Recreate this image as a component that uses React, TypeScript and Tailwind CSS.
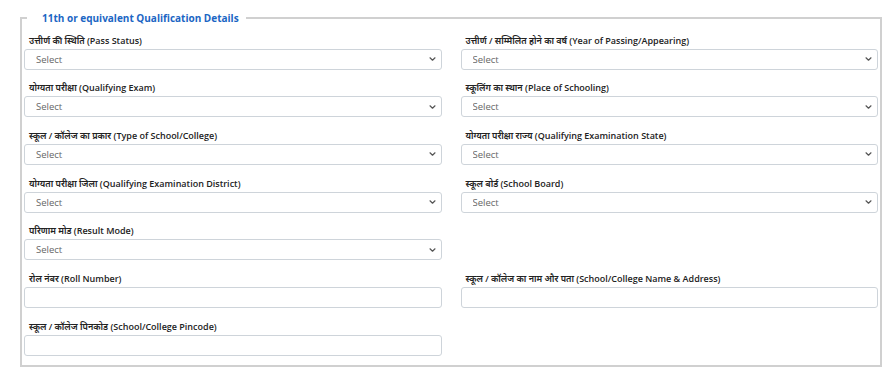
type Field = { label: string; kind: "select" | "input" | "empty" };

const fields: Field[] = [
  { label: "उत्तीर्ण की स्थिति (Pass Status)", kind: "select" },
  { label: "उत्तीर्ण / सम्मिलित होने का वर्ष (Year of Passing/Appearing)", kind: "select" },
  { label: "योग्यता परीक्षा (Qualifying Exam)", kind: "select" },
  { label: "स्कूलिंग का स्थान (Place of Schooling)", kind: "select" },
  { label: "स्कूल / कॉलेज का प्रकार (Type of School/College)", kind: "select" },
  { label: "योग्यता परीक्षा राज्य (Qualifying Examination State)", kind: "select" },
  { label: "योग्यता परीक्षा जिला (Qualifying Examination District)", kind: "select" },
  { label: "स्कूल बोर्ड (School Board)", kind: "select" },
  { label: "परिणाम मोड (Result Mode)", kind: "select" },
  { label: "", kind: "empty" },
  { label: "रोल नंबर (Roll Number)", kind: "input" },
  { label: "स्कूल / कॉलेज का नाम और पता (School/College Name & Address)", kind: "input" },
  { label: "स्कूल / कॉलेज पिनकोड (School/College Pincode)", kind: "input" },
];

function FormField({ field }: { field: Field }) {
  if (field.kind === "empty") return <div />;
  return (
    <div className="flex flex-col">
      <label className="block h-[17px] overflow-visible whitespace-nowrap pl-[5px] text-[9px] font-semibold leading-[17px] text-[#222]">
        {field.label}
      </label>
      {field.kind === "select" ? (
        <div className="relative h-[21px]">
          <select className="block h-[21px] w-full appearance-none rounded-[3px] border border-[#ced4da] bg-white pl-[11px] text-[9.5px] leading-[19px] text-[#666] outline-none">
            <option>Select</option>
          </select>
          <svg
            viewBox="0 0 7 4"
            className="pointer-events-none absolute right-[6px] top-[8.5px] h-[4px] w-[7px]"
            fill="none"
            stroke="#555"
            strokeWidth="1.2"
            strokeLinecap="round"
            strokeLinejoin="round"
          >
            <path d="M1 0.8l2.5 2.4 2.5-2.4" />
          </svg>
        </div>
      ) : (
        <input
          type="text"
          className="block h-[21px] w-full rounded-[3px] border border-[#ced4da] bg-white px-[11px] text-[9.5px] outline-none"
        />
      )}
    </div>
  );
}

export default function App() {
  return (
    <div className="h-[372px] bg-white pl-[20px] pr-[8px] pt-[10px] font-['Open_Sans','Noto_Sans',sans-serif]">
      <fieldset className="border-2 border-[#d0d0d0] px-[2px] pb-[9px]">
        <legend className="ml-[3px] pl-[15px] pr-[7px] text-[10px] font-bold leading-[16px] text-[#1b66c4]">
          11th or equivalent Qualification Details
        </legend>
        <div className="grid grid-cols-2 gap-x-[19px] gap-y-[9.7px] pt-[5.5px]">
          {fields.map((f, i) => (
            <FormField key={i} field={f} />
          ))}
        </div>
      </fieldset>
    </div>
  );
}
